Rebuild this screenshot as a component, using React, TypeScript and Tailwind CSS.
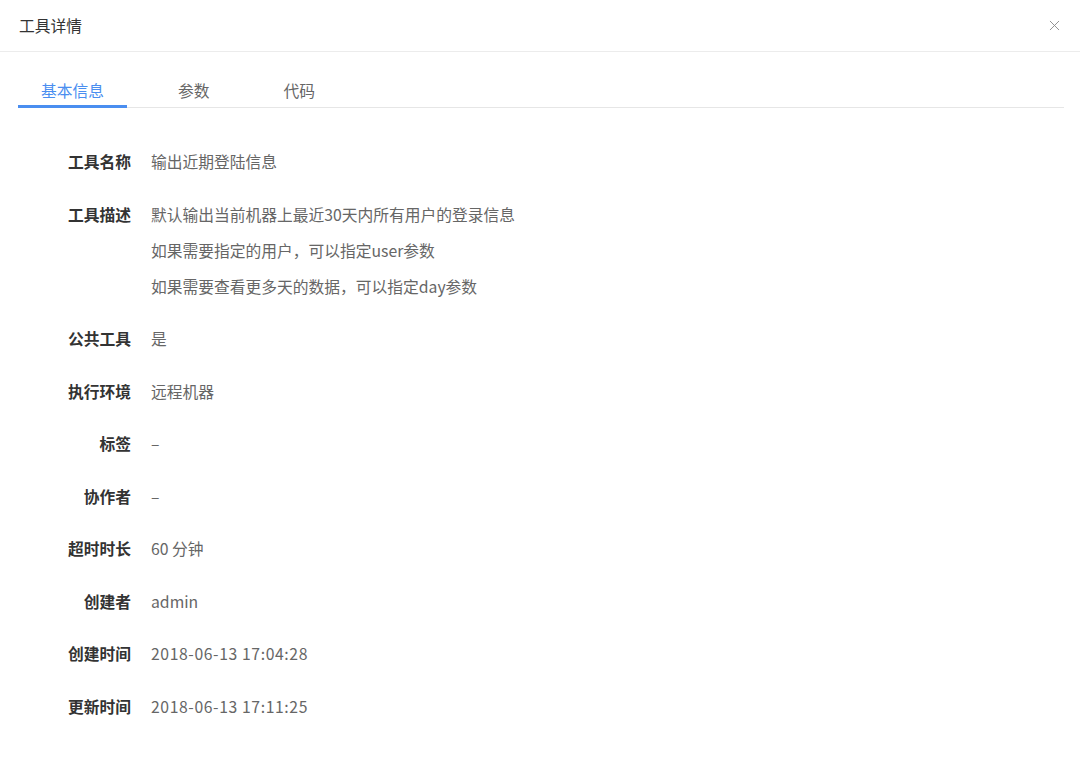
import React, { useState } from "react";
import { X } from "lucide-react";

const rows: { label: string; value: string[]; num?: boolean }[] = [
  { label: "工具名称", value: ["输出近期登陆信息"] },
  {
    label: "工具描述",
    value: [
      "默认输出当前机器上最近30天内所有用户的登录信息",
      "如果需要指定的用户，可以指定user参数",
      "如果需要查看更多天的数据，可以指定day参数",
    ],
  },
  { label: "公共工具", value: ["是"] },
  { label: "执行环境", value: ["远程机器"] },
  { label: "标签", value: ["–"] },
  { label: "协作者", value: ["–"] },
  { label: "超时时长", value: ["60 分钟"] },
  { label: "创建者", value: ["admin"] },
  { label: "创建时间", value: ["2018-06-13 17:04:28"], num: true },
  { label: "更新时间", value: ["2018-06-13 17:11:25"], num: true },
];

const tabs = ["基本信息", "参数", "代码"];

const App = () => {
  const [active, setActive] = useState(0);

  return (
    <div
      className="w-[1080px] h-[758px] bg-white overflow-hidden text-[15.75px]"
      style={{ fontFamily: '"Noto Sans CJK SC", "Noto Sans", sans-serif' }}
    >
      {/* header */}
      <div className="h-[52px] border-b border-[#ececec] flex items-center justify-between pl-[19px] pr-[17px]">
        <span className="text-[#333]">工具详情</span>
        <X size={17} strokeWidth={1.3} className="text-[#8a8a8a]" />
      </div>

      <div className="pl-[18px] pr-[16px] pt-[21px]">
        {/* tabs */}
        <div className="flex gap-[28px] border-b border-[#e6e6e6]">
          {tabs.map((t, i) => (
            <button
              key={t}
              onClick={() => setActive(i)}
              className={
                i === active
                  ? "px-[23px] pt-[6px] pb-[2px] leading-[24px] -mb-px border-b-[3px] border-[#4a8ef0] text-[#4a8ef0]"
                  : "px-[23px] pt-[6px] pb-[2px] leading-[24px] -mb-px border-b-[3px] border-transparent text-[#666]"
              }
            >
              {t}
            </button>
          ))}
        </div>

        {/* detail rows */}
        <div className="flex flex-col gap-[16.5px] pt-[36px]">
          {rows.map((r) => (
            <div key={r.label} className="flex gap-[20px] leading-[36px]">
              <div className="w-[113px] text-right font-semibold text-[#333] shrink-0">
                {r.label}
              </div>
              <div className={r.num ? "flex flex-col text-[#666] tracking-[0.6px]" : "flex flex-col text-[#666]"}>
                {r.value.map((v) => (
                  <span key={v}>{v}</span>
                ))}
              </div>
            </div>
          ))}
        </div>
      </div>
    </div>
  );
};

export default App;
